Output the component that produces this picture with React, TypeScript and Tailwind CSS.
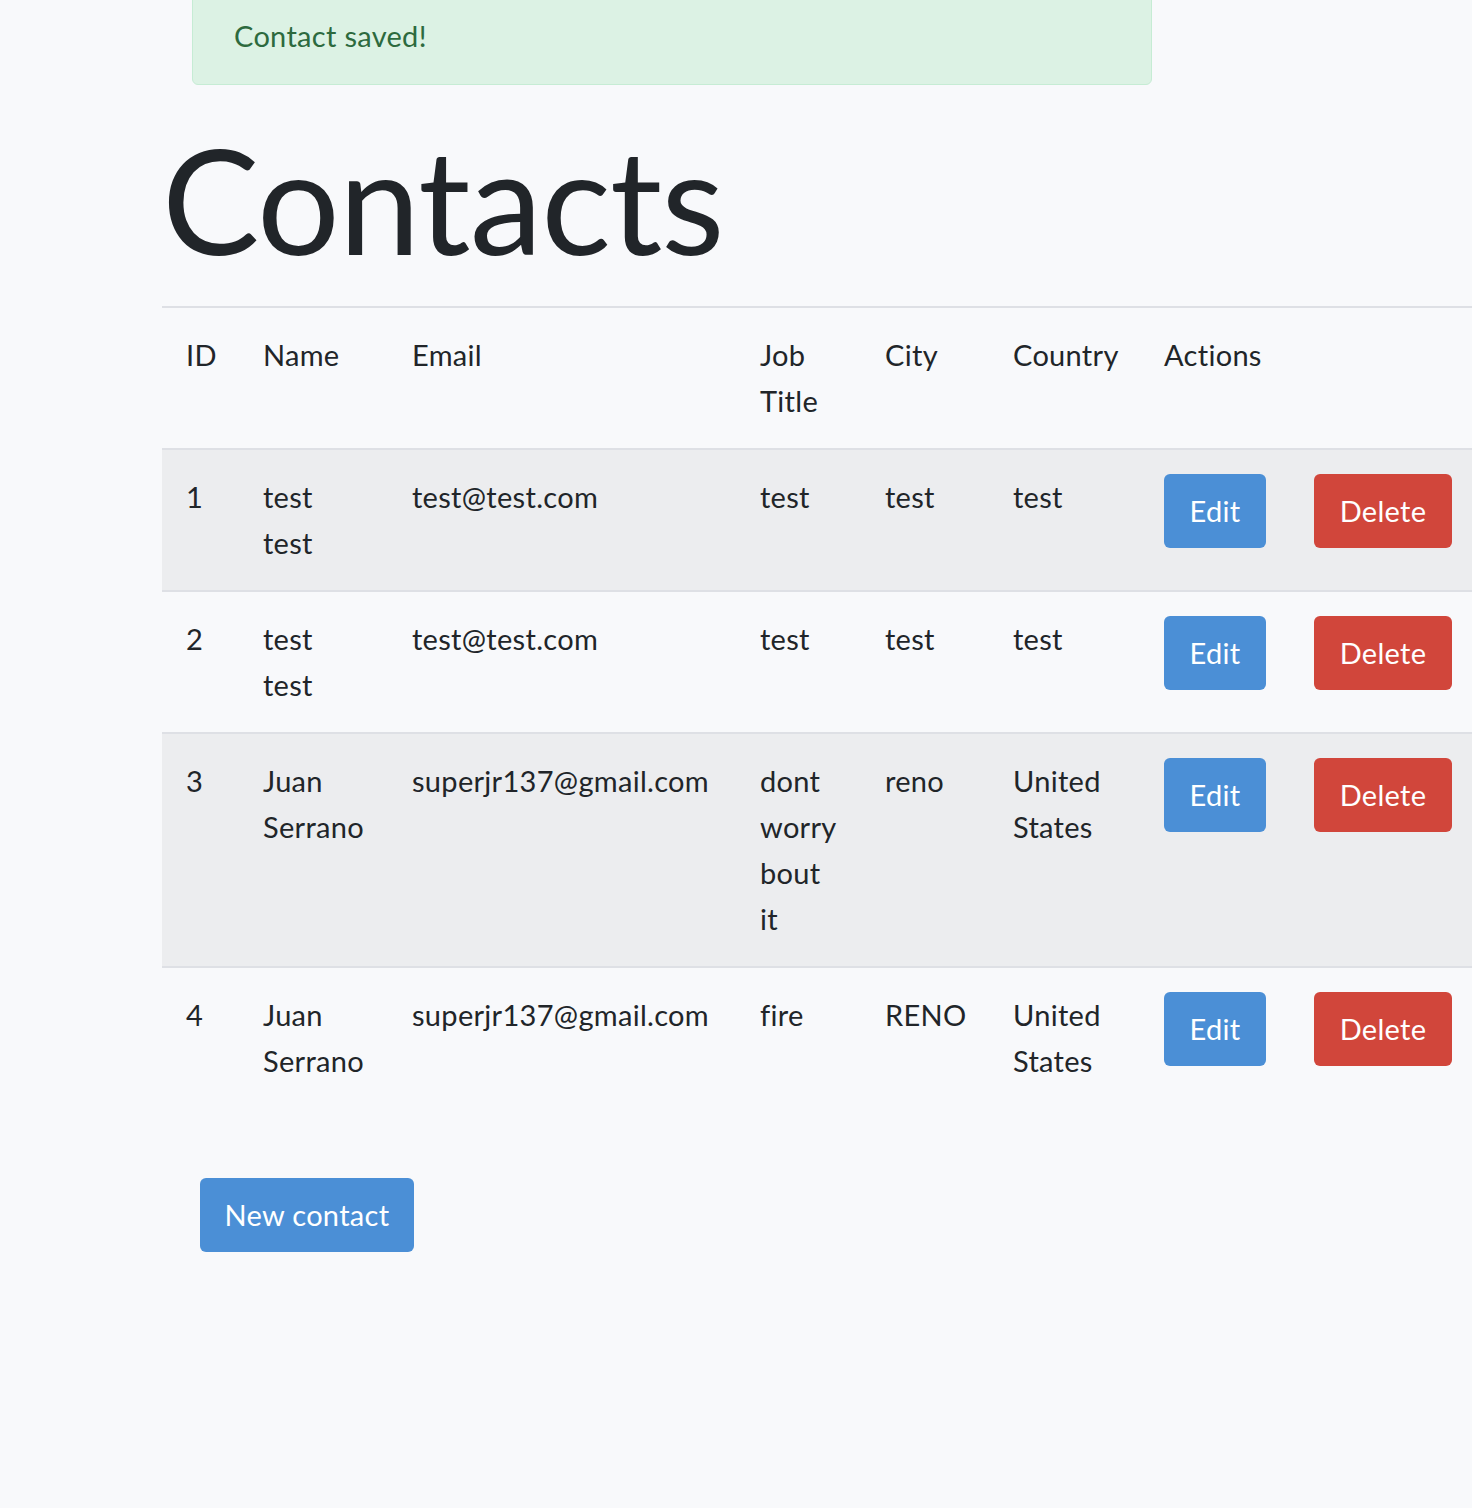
import React from "react";

type Contact = {
  id: number;
  name: string;
  email: string;
  job: string;
  city: string;
  country: string;
};

const contacts: Contact[] = [
  { id: 1, name: "test test", email: "test@test.com", job: "test", city: "test", country: "test" },
  { id: 2, name: "test test", email: "test@test.com", job: "test", city: "test", country: "test" },
  { id: 3, name: "Juan Serrano", email: "superjr137@gmail.com", job: "dont worry bout it", city: "reno", country: "United States" },
  { id: 4, name: "Juan Serrano", email: "superjr137@gmail.com", job: "fire", city: "RENO", country: "United States" },
];

const cell = "px-6 py-6 align-top text-left font-normal";

export default function App() {
  return (
    <div className="min-h-screen overflow-hidden bg-[#f8f9fb] pl-[162px] text-[29px] leading-[46px] tracking-[0.3px] text-[#212529] font-['Lato','Noto_Sans',sans-serif]">
      {/* Flash message */}
      <div className="-mt-[13px] ml-[30px] w-[960px] rounded-b-md border border-[#c6ecd4] bg-[#dcf2e4] px-[41px] pt-[25px] pb-[25px] text-[#2d6a3e]">
        Contact saved!
      </div>

      <h1 className="mt-[26px] text-[146px] leading-[1.2] tracking-[-1px] text-[#212529]">Contacts</h1>

      <table className="mt-[20px] w-[1310px] table-fixed border-collapse">
        <colgroup>
          <col className="w-[77px]" />
          <col className="w-[149px]" />
          <col className="w-[348px]" />
          <col className="w-[125px]" />
          <col className="w-[128px]" />
          <col className="w-[151px]" />
          <col className="w-[150px]" />
          <col />
        </colgroup>
        <thead>
          <tr className="border-t-2 border-b-2 border-[#dee0e5]">
            <th className={cell}>ID</th>
            <th className={cell}>Name</th>
            <th className={cell}>Email</th>
            <th className={cell}><div className="w-min">Job Title</div></th>
            <th className={cell}>City</th>
            <th className={cell}>Country</th>
            <th className={cell}>Actions</th>
            <th className={cell}></th>
          </tr>
        </thead>
        <tbody>
          {contacts.map((c, i) => (
            <tr key={c.id} className={`border-t-2 border-[#dee0e5] ${i % 2 === 0 ? "bg-[#ecedef]" : ""}`}>
              <td className={cell}>{c.id}</td>
              <td className={cell}><div className="w-min">{c.name}</div></td>
              <td className={cell}>{c.email}</td>
              <td className={cell}><div className="w-min">{c.job}</div></td>
              <td className={cell}>{c.city}</td>
              <td className={cell}><div className="w-min">{c.country}</div></td>
              <td className={cell}>
                <button className="h-[74px] w-[102px] rounded-md bg-[#4b8fd6] text-white">Edit</button>
              </td>
              <td className={cell}>
                <button className="h-[74px] w-[138px] rounded-md bg-[#d1463b] text-white">Delete</button>
              </td>
            </tr>
          ))}
        </tbody>
      </table>

      <button className="mt-[70px] ml-[38px] h-[74px] w-[214px] rounded-md bg-[#4b8fd6] text-white">New contact</button>
    </div>
  );
}
